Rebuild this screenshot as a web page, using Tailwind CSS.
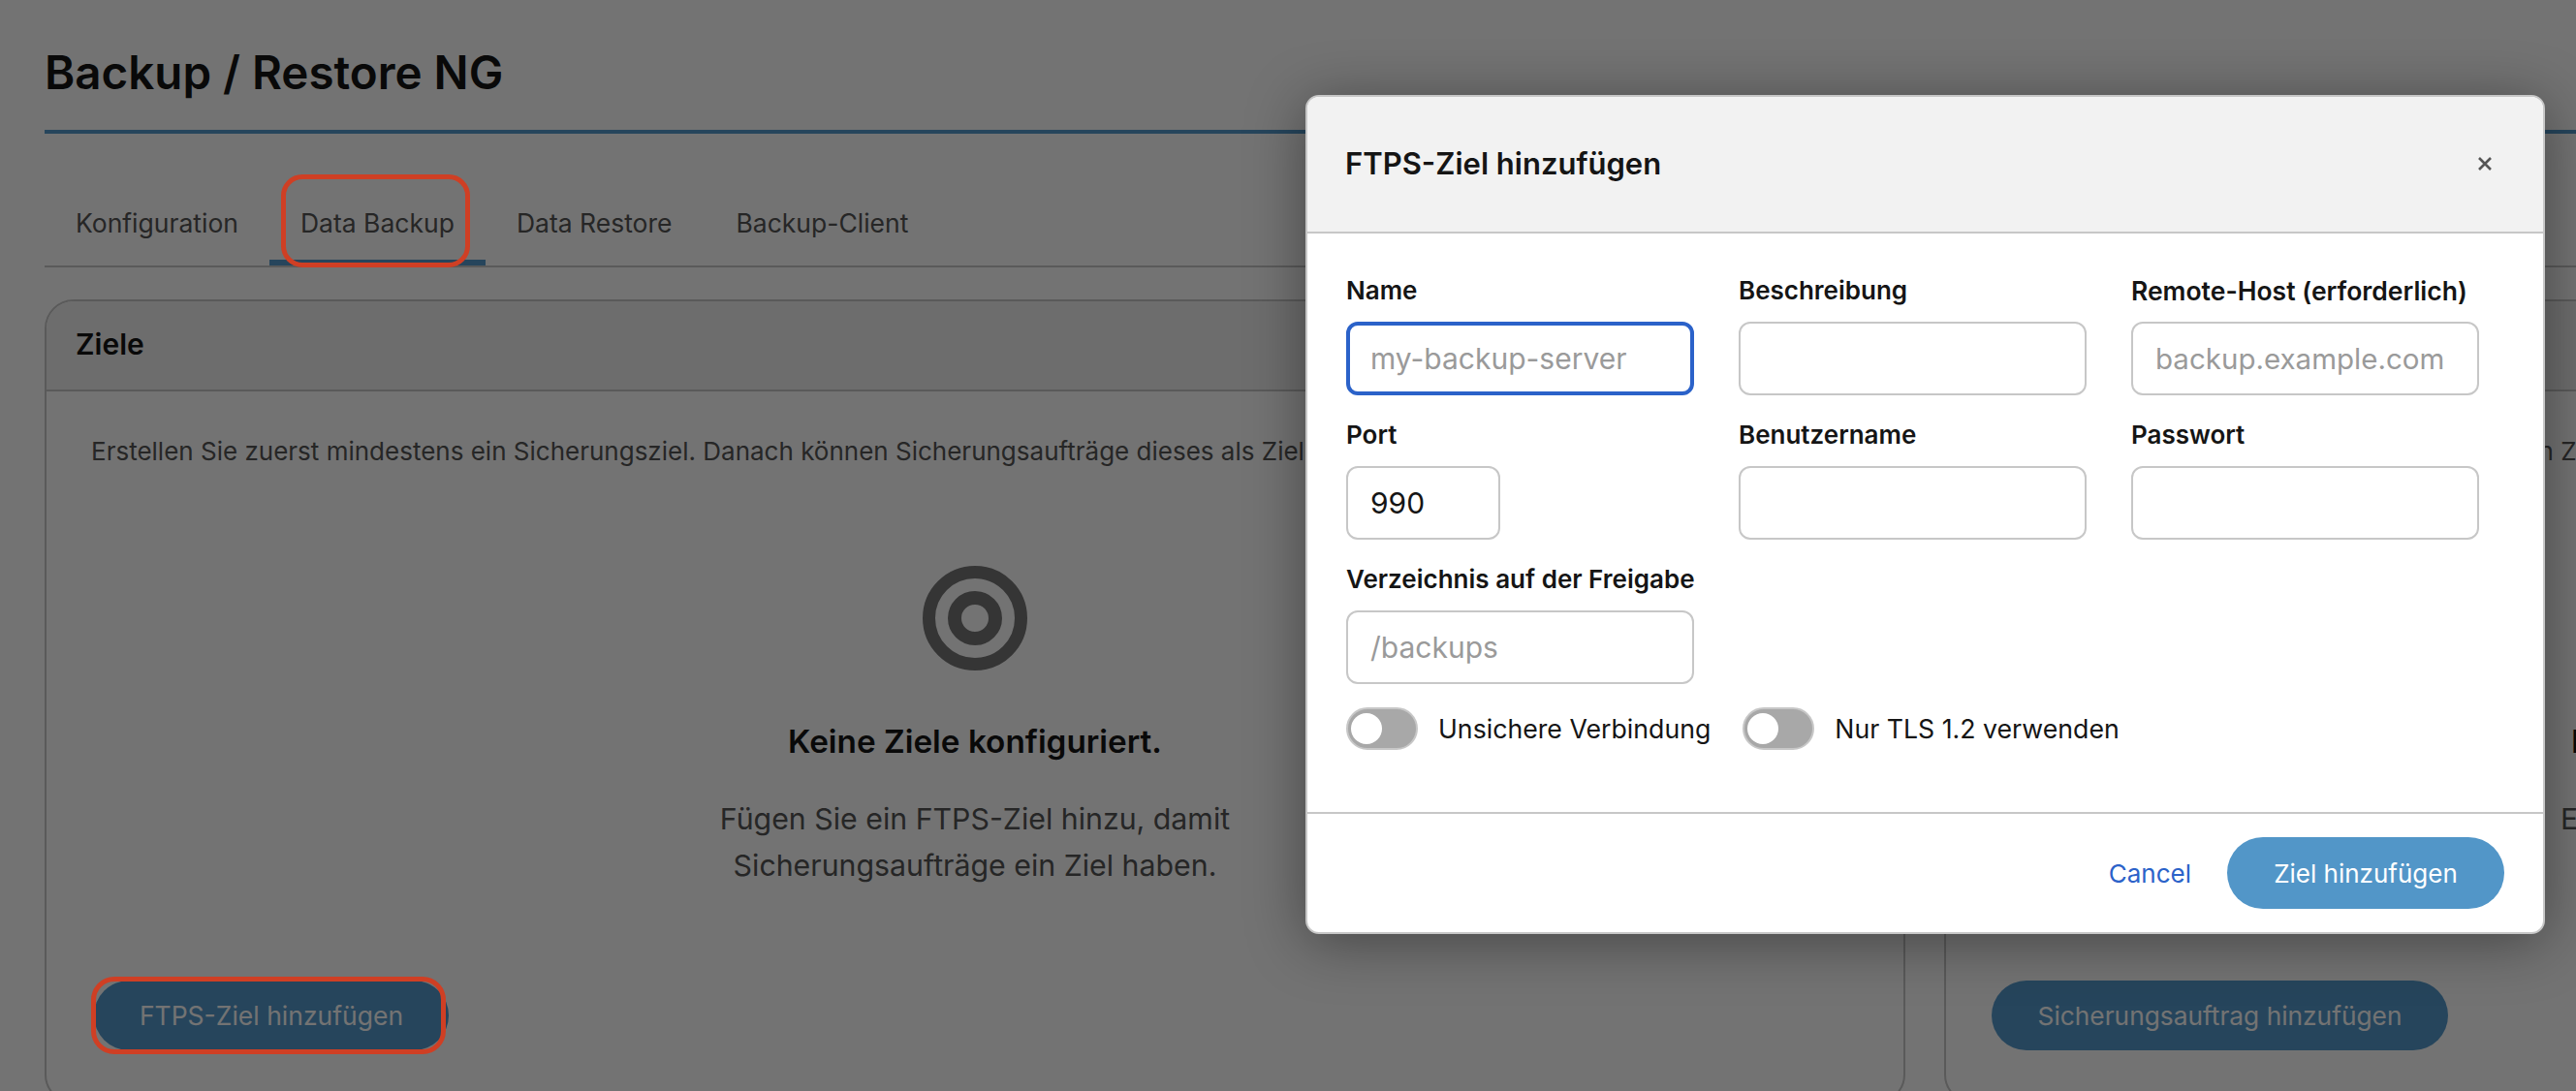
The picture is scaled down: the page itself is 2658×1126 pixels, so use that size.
<!DOCTYPE html>
<html lang="de">
<head>
    <meta charset="UTF-8">
    <title>Backup / Restore NG</title>
    <script src="https://cdn.jsdelivr.net/npm/@tailwindcss/browser@4"></script>
</head>
<body class="relative w-[2658px] h-[1126px] overflow-hidden bg-white font-[family-name:Inter,sans-serif]">
    <!-- page behind the dialog -->
    <main class="w-[3973px] px-[46px]">
        <header class="h-[138px] flex items-center border-b-4 border-[#5499cc]">
            <h1 class="text-[47.5px] font-semibold text-[#151515] pt-[16px]">Backup / Restore NG</h1>
        </header>

        <nav class="flex mt-[48px] border-b-2 border-[#c7c7c7] text-[26.5px] text-[#555]">
            <a class="h-[88px] flex items-center px-[32px] pt-[2px]">Konfiguration</a>
            <a class="h-[88px] flex items-center px-[32px] -mb-[2px] border-b-[6px] border-[#5499cc] pt-[8px]">Data Backup</a>
            <a class="h-[88px] flex items-center pl-[32px] pr-[34px] pt-[2px]">Data Restore</a>
            <a class="h-[88px] flex items-center px-[32px] pt-[2px]">Backup-Client</a>
        </nav>

        <div class="flex gap-[40px] mt-[33px]">
            <section class="w-[1920px] h-[830px] shrink-0 border-2 border-[#c7c7c7] rounded-[30px] overflow-hidden">
                <div class="h-[93px] flex items-center px-[30px] bg-[#f2f2f2] border-b-2 border-[#c7c7c7] text-[30px] font-semibold text-[#151515] pb-[3px]">Ziele</div>
                <div class="px-[46px]">
                    <p class="pt-[44px] text-[26px] leading-[36px] text-[#555] whitespace-nowrap">Erstellen Sie zuerst mindestens ein Sicherungsziel. Danach können Sicherungsaufträge dieses als Ziel verwenden.</p>
                    <div class="flex flex-col items-center text-center">
                        <svg class="mt-[100px]" width="108" height="108" viewBox="0 0 108 108">
                            <circle cx="54" cy="54" r="47.5" fill="none" stroke="#777" stroke-width="13"/>
                            <circle cx="54" cy="54" r="21" fill="none" stroke="#777" stroke-width="14"/>
                        </svg>
                        <h2 class="mt-[53px] text-[33.3px] leading-[40px] font-semibold text-[#151515]">Keine Ziele konfiguriert.</h2>
                        <p class="mt-[36px] text-[30.3px] leading-[48px] text-[#555]">Fügen Sie ein FTPS-Ziel hinzu, damit<br>Sicherungsaufträge ein Ziel haben.</p>
                    </div>
                    <button class="mt-[95px] ml-[3px] w-[366px] h-[72px] pt-[2px] rounded-full bg-[#5499cc] text-white text-[26.5px]">FTPS-Ziel hinzufügen</button>
                </div>
            </section>

            <section class="w-[1920px] h-[830px] shrink-0 border-2 border-[#c7c7c7] rounded-[30px] overflow-hidden">
                <div class="h-[93px] flex items-center px-[30px] bg-[#f2f2f2] border-b-2 border-[#c7c7c7] text-[30px] font-semibold text-[#151515] pb-[3px]">Sicherungsaufträge</div>
                <div class="px-[46px]">
                    <p class="pt-[44px] text-[26px] leading-[36px] text-[#555] whitespace-nowrap">Sicherungsaufträge sichern Ihre Daten über ein Ziel.</p>
                    <div class="flex flex-col items-center text-center">
                        <div class="mt-[100px] h-[108px]"></div>
                        <h2 class="mt-[53px] text-[33.3px] leading-[40px] font-semibold text-[#151515]">Keine Sicherungsaufträge konfiguriert.</h2>
                        <p class="mt-[36px] text-[30.3px] leading-[48px] text-[#555]">Erstellen Sie einen Sicherungsauftrag, um ein<br>Ziel zu verwenden.</p>
                    </div>
                    <button class="mt-[95px] ml-[1px] w-[471px] h-[72px] pt-[2px] rounded-full bg-[#5499cc] text-white text-[26.3px]">Sicherungsauftrag hinzufügen</button>
                </div>
            </section>
        </div>
    </main>

    <!-- backdrop -->
    <div class="absolute inset-0 bg-black/55"></div>

    <!-- red annotations on the screenshot -->
    <div class="absolute left-[290px] top-[180px] w-[195px] h-[96px] border-[5px] border-[#cf3f24] rounded-[22px]"></div>
    <div class="absolute left-[94px] top-[1008px] w-[366px] h-[80px] border-[5px] border-[#cf3f24] rounded-[24px]"></div>

    <!-- dialog -->
    <div class="absolute left-[1347px] top-[98px] w-[1279px] bg-white border-2 border-[#c7c7c7] rounded-[14px] overflow-hidden shadow-[0_8px_60px_rgba(0,0,0,0.4)]">
        <div class="h-[141px] flex items-center justify-between pl-[39px] pr-[52px] bg-[#f2f2f2] border-b-2 border-[#c7c7c7]">
            <h3 class="text-[31px] font-semibold text-[#151515]">FTPS-Ziel hinzufügen</h3>
            <svg width="16" height="16" viewBox="0 0 16 16" class="-mt-[2px]"><path d="M2 2l12 12M14 2L2 14" stroke="#555" stroke-width="2.6" fill="none"/></svg>
        </div>

        <form class="pl-[40px] pt-[41px]">
            <div class="grid grid-cols-[359px_359px_359px] gap-x-[46px] gap-y-[23px]">
                <div>
                    <label class="block mb-[14px] text-[26px] leading-[36px] font-semibold text-[#151515]">Name</label>
                    <input class="w-full h-[76px] px-[21px] rounded-[12px] border-4 border-[#2b62c9] text-[30px] outline-none placeholder:text-[#9a9a9a]" placeholder="my-backup-server">
                </div>
                <div>
                    <label class="block mb-[14px] text-[26px] leading-[36px] font-semibold text-[#151515]">Beschreibung</label>
                    <input class="w-full h-[76px] px-[24px] rounded-[12px] border-2 border-[#c7c7c7] text-[30px] outline-none">
                </div>
                <div>
                    <label class="block mb-[14px] text-[26.5px] leading-[36px] font-semibold text-[#151515] whitespace-nowrap">Remote-Host (erforderlich)</label>
                    <input class="w-full h-[76px] px-[23px] rounded-[12px] border-2 border-[#c7c7c7] text-[29.5px] outline-none placeholder:text-[#9a9a9a]" placeholder="backup.example.com">
                </div>
                <div>
                    <label class="block mb-[14px] text-[26px] leading-[36px] font-semibold text-[#151515]">Port</label>
                    <input class="w-[159px] h-[76px] px-[23px] rounded-[12px] border-2 border-[#c7c7c7] text-[30px] text-[#151515] outline-none" value="990">
                </div>
                <div>
                    <label class="block mb-[14px] text-[26px] leading-[36px] font-semibold text-[#151515]">Benutzername</label>
                    <input class="w-full h-[76px] px-[24px] rounded-[12px] border-2 border-[#c7c7c7] text-[30px] outline-none">
                </div>
                <div>
                    <label class="block mb-[14px] text-[26px] leading-[36px] font-semibold text-[#151515]">Passwort</label>
                    <input class="w-full h-[76px] px-[24px] rounded-[12px] border-2 border-[#c7c7c7] text-[30px] outline-none">
                </div>
                <div>
                    <label class="block mb-[14px] text-[26px] leading-[36px] font-semibold text-[#151515] whitespace-nowrap">Verzeichnis auf der Freigabe</label>
                    <input class="w-full h-[76px] px-[23px] rounded-[12px] border-2 border-[#c7c7c7] text-[30px] outline-none placeholder:text-[#9a9a9a]" placeholder="/backups">
                </div>
            </div>

            <div class="flex items-center mt-[24px] h-[44px] text-[26.7px] text-[#151515]">
                <span class="w-[74px] h-[44px] flex items-center pl-[3px] rounded-full bg-[#a8a8a8] border-2 border-[#c7c7c7]"><span class="w-[32px] h-[32px] rounded-full bg-white"></span></span>
                <span class="ml-[21px]">Unsichere Verbindung</span>
                <span class="ml-[33px] w-[74px] h-[44px] flex items-center pl-[3px] rounded-full bg-[#a8a8a8] border-2 border-[#c7c7c7]"><span class="w-[32px] h-[32px] rounded-full bg-white"></span></span>
                <span class="ml-[21px]">Nur TLS 1.2 verwenden</span>
            </div>
        </form>

        <div class="mt-[64px] h-[124px] flex items-center justify-end gap-[37px] pr-[40px] border-t-2 border-[#c7c7c7]">
            <a class="text-[26px] text-[#2b62c9]">Cancel</a>
            <button class="w-[286px] h-[74px] rounded-full bg-[#5296c8] text-white text-[26px]">Ziel hinzufügen</button>
        </div>
    </div>
</body>
</html>
